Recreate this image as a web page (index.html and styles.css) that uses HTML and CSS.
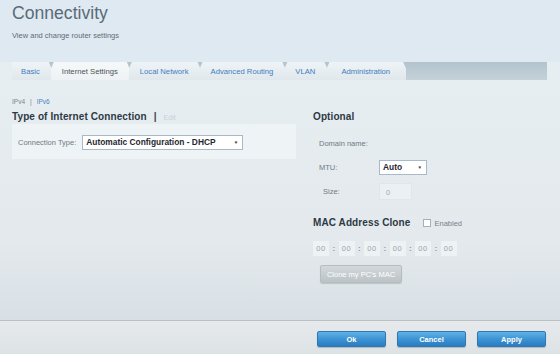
FILE: index.html
```html
<!DOCTYPE html>
<html lang="en">
<head>
    <meta charset="UTF-8">
    <title>Connectivity</title>
    <link rel="stylesheet" href="styles.css">
</head>
<body>
    <header class="page-head">
        <h1 class="page-title">Connectivity</h1>
        <p class="page-subtitle">View and change router settings</p>
    </header>

    <main class="content">
        <nav class="tabs">
            <a class="tab" href="#basic">Basic</a>
            <a class="tab active" href="#internet">Internet Settings</a>
            <a class="tab" href="#local">Local Network</a>
            <a class="tab" href="#routing">Advanced Routing</a>
            <a class="tab" href="#vlan">VLAN</a>
            <a class="tab" href="#admin">Administration</a>
        </nav>

        <div class="ip-switch">
            <span class="ip-current">IPv4</span>
            <span class="ip-sep">|</span>
            <a class="ip-link" href="#ipv6">IPv6</a>
        </div>

        <div class="columns">
            <section class="col-left">
                <h2 class="section-title">Type of Internet Connection <span class="title-sep">|</span> <span class="edit-link">Edit</span></h2>
                <div class="panel">
                    <span class="field-label">Connection Type:</span>
                    <div class="dropdown dropdown-wide">
                        <span>Automatic Configuration - DHCP</span>
                        <span class="caret">&#9660;</span>
                    </div>
                </div>
            </section>

            <section class="col-right">
                <h2 class="section-title">Optional</h2>
                <div class="form-rows">
                    <div class="form-row">
                        <span class="field-label">Domain name:</span>
                    </div>
                    <div class="form-row">
                        <span class="field-label">MTU:</span>
                        <div class="dropdown dropdown-small">
                            <span>Auto</span>
                            <span class="caret">&#9660;</span>
                        </div>
                    </div>
                    <div class="form-row">
                        <span class="field-label indent">Size:</span>
                        <div class="text-box">0</div>
                    </div>
                </div>

                <div class="mac-head">
                    <h2 class="section-title">MAC Address Clone</h2>
                    <label class="check">
                        <span class="check-box"></span>
                        <span>Enabled</span>
                    </label>
                </div>

                <div class="mac-fields">
                    <span class="mac-box">00</span><span class="mac-colon">:</span>
                    <span class="mac-box">00</span><span class="mac-colon">:</span>
                    <span class="mac-box">00</span><span class="mac-colon">:</span>
                    <span class="mac-box">00</span><span class="mac-colon">:</span>
                    <span class="mac-box">00</span><span class="mac-colon">:</span>
                    <span class="mac-box">00</span>
                </div>

                <button class="btn-clone" disabled>Clone my PC's MAC</button>
            </section>
        </div>
    </main>

    <footer class="actions">
        <button class="btn-blue">Ok</button>
        <button class="btn-blue">Cancel</button>
        <button class="btn-blue">Apply</button>
    </footer>
</body>
</html>
```

FILE: styles.css
```css
* {
    box-sizing: border-box;
}

html, body {
    height: 100%;
}

body {
    margin: 0;
    font-family: 'Liberation Sans', Arial, sans-serif;
    background-color: #dfe9f0;
    color: #333d45;
    display: flex;
    flex-direction: column;
    overflow: hidden;
}

.page-head {
    height: 62px;
    padding: 2px 12px 0;
    background-color: #dee9f1;
}

.page-title {
    margin: 0;
    font-size: 17.6px;
    line-height: 22px;
    font-weight: normal;
    color: #5a6a78;
}

.page-subtitle {
    margin: 7px 0 0;
    font-size: 7.5px;
    line-height: 10px;
    color: #5f6b74;
}

.content {
    flex: 1;
    background: linear-gradient(#e7eef2, #e3e9ed 70%, #d9e0e5);
}

/* tab strip */
.tabs {
    display: flex;
    height: 18px;
    margin: 0 13px 0 12px;
    background: linear-gradient(#b3c4ce, #c4d1d8);
}

.tab {
    display: flex;
    align-items: center;
    height: 18px;
    padding: 0 12px 0 11px;
    margin-right: -1px;
    font-size: 7.7px;
    color: #3f7dbd;
    text-decoration: none;
    background: linear-gradient(#eef3f6, #e0e8ed);
    clip-path: polygon(3px 0, calc(100% - 3px) 0, 100% 7px, 100% 100%, 0 100%, 0 7px);
}

.tab:first-child {
    padding-left: 9px;
    clip-path: polygon(0 0, calc(100% - 3px) 0, 100% 7px, 100% 100%, 0 100%);
}

.tab:last-child {
    padding: 0 16px 0 15px;
}

.tab.active {
    color: #4b5359;
    background: linear-gradient(#f6f8f9, #eef2f4);
}

.ip-switch {
    display: flex;
    gap: 5px;
    height: 10px;
    margin: 17px 0 0 12px;
    font-size: 6.5px;
    line-height: 10px;
    color: #7b868e;
}

.ip-link {
    color: #4a83bf;
    text-decoration: none;
}

.columns {
    display: flex;
    gap: 17px;
    padding-left: 12px;
    margin-top: 4px;
}

.col-left {
    width: 284px;
}

.section-title {
    margin: 0;
    font-size: 10px;
    line-height: 12px;
    font-weight: bold;
    color: #2d3944;
    letter-spacing: 0.1px;
}

.title-sep {
    margin-left: 4px;
    color: #3a4550;
}

.edit-link {
    margin-left: 4px;
    font-size: 7px;
    font-weight: normal;
    color: #c9d1d6;
}

.panel {
    display: flex;
    align-items: center;
    gap: 6px;
    height: 35px;
    margin-top: 0;
    padding: 1px 6px 0;
    background-color: #eef3f5;
}

.field-label {
    font-size: 7.5px;
    color: #6f7a82;
}

.dropdown {
    display: flex;
    align-items: center;
    justify-content: space-between;
    height: 15px;
    padding: 0 4px 0 3px;
    background-color: #ffffff;
    border: 1px solid #a9b9c7;
    font-size: 8.4px;
    font-weight: bold;
    color: #1f2830;
}

.dropdown-wide {
    width: 161px;
}

.dropdown-small {
    width: 48px;
    height: 15px;
}

.caret {
    font-size: 4.5px;
    color: #333;
}

.col-right {
    width: 240px;
}

.form-rows {
    margin-top: 8px;
}

.form-row {
    display: flex;
    align-items: center;
    height: 24px;
    padding-left: 6px;
}

.form-row .field-label {
    width: 60px;
}

.form-row .indent {
    padding-left: 4px;
}

.text-box {
    width: 33px;
    height: 17px;
    padding-left: 6px;
    line-height: 17px;
    font-size: 7.5px;
    color: #a5adb2;
    background-color: #eaf0f3;
    border: 1px solid #e0e7eb;
}

.mac-head {
    display: flex;
    align-items: center;
    gap: 13px;
    margin-top: 14px;
}

.check {
    display: flex;
    align-items: center;
    gap: 3px;
    font-size: 7.5px;
    color: #77828a;
}

.check-box {
    width: 8px;
    height: 8px;
    background-color: #ffffff;
    border: 1px solid #a3b0ba;
}

.mac-fields {
    display: flex;
    align-items: center;
    height: 15px;
    margin-top: 12px;
}

.mac-box {
    width: 16px;
    height: 15px;
    line-height: 15px;
    text-align: center;
    font-size: 7.5px;
    letter-spacing: 0.5px;
    color: #9aa4ab;
    background-color: #edf2f4;
}

.mac-colon {
    width: 9.5px;
    text-align: center;
    font-size: 8px;
    font-weight: bold;
    color: #8c969d;
}

.btn-clone {
    display: block;
    width: 82px;
    height: 18px;
    margin: 9px 0 0 7px;
    padding: 0;
    font-family: inherit;
    font-size: 7.5px;
    color: #ffffff;
    background: linear-gradient(#d2d8db, #bcc3c7);
    border: 1px solid #b6bdc1;
    border-radius: 2px;
    box-shadow: 0 1px 1px rgba(0, 0, 0, 0.15);
}

/* bottom buttons */
.actions {
    display: flex;
    justify-content: flex-end;
    gap: 11px;
    height: 34px;
    padding: 10px 14px 0 0;
    border-top: 1px solid #b9c1c5;
    background: linear-gradient(#e6eaec, #dde2e5);
}

.btn-blue {
    width: 69px;
    height: 16px;
    padding: 0;
    font-family: inherit;
    font-size: 7.5px;
    font-weight: bold;
    color: #ffffff;
    background: linear-gradient(#5eb3e8, #3b91d1 55%, #2a7cc0);
    border: 1px solid #2f78b4;
    border-radius: 2px;
    box-shadow: 0 1px 1px rgba(0, 0, 0, 0.2);
}
```
